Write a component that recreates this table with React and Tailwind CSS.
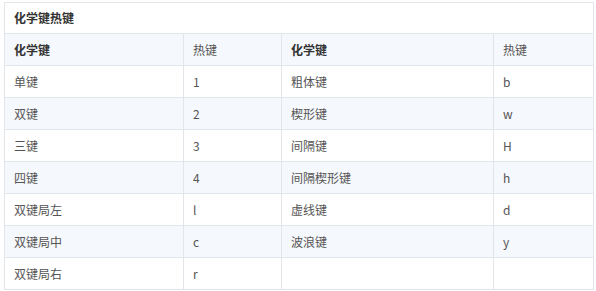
const rows = [
  ['单键', '1', '粗体键', 'b'],
  ['双键', '2', '楔形键', 'w'],
  ['三键', '3', '间隔键', 'H'],
  ['四键', '4', '间隔楔形键', 'h'],
  ['双键局左', 'l', '虚线键', 'd'],
  ['双键局中', 'c', '波浪键', 'y'],
  ['双键局右', 'r', '', ''],
]

export default function App() {
  return (
    <div
      className="w-[596px] h-[291px] bg-white pl-[4px] pt-[2px] text-[12px] text-[#555]"
      style={{ fontFamily: '"Noto Sans CJK SC", "Liberation Sans", sans-serif' }}
    >
      <table className="w-[589px] border-collapse table-fixed border border-[#e2e5ea]">
        <colgroup>
          <col className="w-[179px]" />
          <col className="w-[98px]" />
          <col className="w-[212px]" />
          <col className="w-[100px]" />
        </colgroup>
        <thead>
          <tr className="h-[31px]">
            <th colSpan={4} className="text-left font-bold text-[#333] px-[9px] border border-[#e2e5ea]">
              化学键热键
            </th>
          </tr>
          <tr className="h-[32px] bg-[#f5f8fc]">
            <th className="text-left font-bold text-[#333] px-[9px] border border-[#e2e5ea]">化学键</th>
            <th className="text-left font-normal text-[#555] px-[9px] border border-[#e2e5ea]">热键</th>
            <th className="text-left font-bold text-[#333] px-[9px] border border-[#e2e5ea]">化学键</th>
            <th className="text-left font-normal text-[#555] px-[9px] border border-[#e2e5ea]">热键</th>
          </tr>
        </thead>
        <tbody>
          {rows.map((r, i) => (
            <tr key={i} className={i % 2 === 1 ? 'h-[32px] bg-[#f5f8fc]' : 'h-[32px] bg-white'}>
              {r.map((c, j) => (
                <td key={j} className="px-[9px] border border-[#e2e5ea]">
                  {c}
                </td>
              ))}
            </tr>
          ))}
        </tbody>
      </table>
    </div>
  )
}
